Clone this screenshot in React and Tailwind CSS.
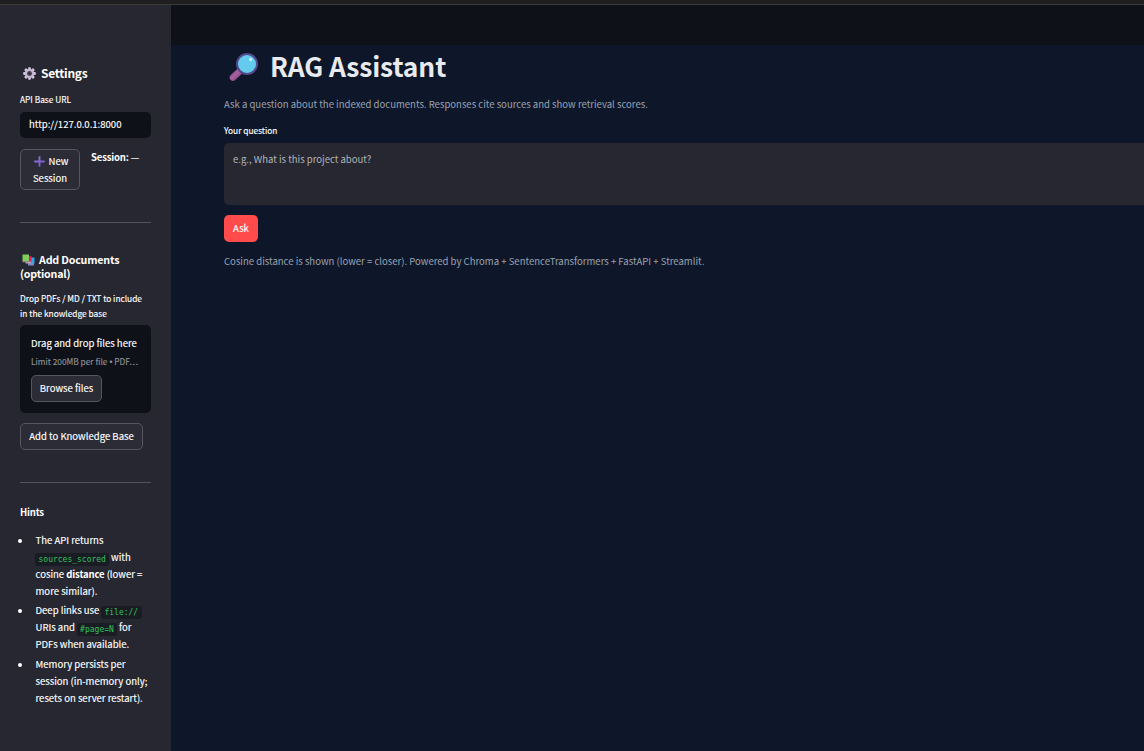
const Gear = () => (
  <svg className="h-[13px] w-[13px] shrink-0" viewBox="0 0 26 26">
    <g fill="#d3c8df">
      {[0, 45, 90, 135, 180, 225, 270, 315].map((a) => (
        <rect key={a} x="10.2" y="0.3" width="5.6" height="7" rx="1.6" transform={`rotate(${a} 13 13)`} />
      ))}
    </g>
    <circle cx="13" cy="13" r="6.8" fill="none" stroke="#c3b5d2" strokeWidth="5" />
    <circle cx="13" cy="13" r="4.6" fill="#4a4454" />
    <circle cx="13" cy="13" r="2" fill="#26272f" />
  </svg>
);

const Plus = () => (
  <svg className="h-[11px] w-[11px] shrink-0" viewBox="0 0 20 20">
    <defs>
      <linearGradient id="plus" x1="0" y1="0" x2="1" y2="1">
        <stop offset="0" stopColor="#9a7ce0" />
        <stop offset="1" stopColor="#6f4fc4" />
      </linearGradient>
    </defs>
    <path d="M8.3 0.5h3.4v7.8h7.8v3.4H11.7v7.8H8.3V11.7H0.5V8.3H8.3z" fill="url(#plus)" />
  </svg>
);

const Books = () => (
  <svg className="h-[12px] w-[13px] shrink-0" viewBox="0 0 26 24">
    <path d="M13 7h12v12H13z" fill="#2fa8e8" />
    <path d="M12 18h12v5H12z" fill="#7f88c8" />
    <path d="M8 4h11v12H8z" fill="#e5175c" />
    <path d="M7 15h11v4H7z" fill="#b9a0b8" />
    <path d="M1 1h13v13H1z" fill="#7fce5b" />
    <path d="M1 14h13v2.5H1z" fill="#8f8a86" />
  </svg>
);

const Magnifier = () => (
  <svg className="h-[30px] w-[30px] shrink-0" viewBox="0 0 30 30">
    <defs>
      <linearGradient id="handle" x1="0" y1="0" x2="1" y2="1">
        <stop offset="0" stopColor="#8d4f90" />
        <stop offset="0.5" stopColor="#a9619f" />
        <stop offset="1" stopColor="#7b407f" />
      </linearGradient>
    </defs>
    <path d="M4 25.5L11 19" stroke="url(#handle)" strokeWidth="6.6" strokeLinecap="round" />
    <circle cx="18" cy="12" r="10" fill="#64cbee" stroke="#54498a" strokeWidth="2" />
    <circle cx="21.6" cy="7.5" r="1.6" fill="#d8f6ff" />
  </svg>
);

const Code = ({ children }) => (
  <code className="mx-[-0.5px] rounded-[3px] bg-[#1a1c24] px-[3.5px] py-[2px] align-[-1px] font-['DejaVu_Sans_Mono',monospace] text-[8px] leading-none text-[#31c45c] [-webkit-text-stroke:0px]">
    {children}
  </code>
);

const Bullet = ({ children }) => (
  <li className="flex">
    <span className="mt-[7px] mr-[13.5px] ml-[-2px] h-[4px] w-[4px] shrink-0 rounded-full bg-white" />
    <div className="whitespace-nowrap">{children}</div>
  </li>
);

export default function App() {
  return (
    <div className="flex h-[751px] w-[1144px] flex-col overflow-hidden bg-[#0e172a] font-['Noto_Sans_CJK_SC',sans-serif] text-[9.55px] text-white">
      <div className="h-[5px] shrink-0 border-b border-[#3b3b3b] bg-[#1f1f1f]" />
      <div className="flex min-h-0 flex-1">
        <aside className="flex w-[171px] shrink-0 flex-col bg-[#262730] px-[20px] pt-[58px] [-webkit-text-stroke:0.14px]">
          <h2 className="flex h-[20px] items-center pl-[3px] text-[12px] leading-[20px] font-bold tracking-[-0.28px] [-webkit-text-stroke:0px]">
            <Gear />
            <span className="ml-[5px]">Settings</span>
          </h2>
          <label className="mt-[9px] h-[14px] text-[8.35px] leading-[14px]">API Base URL</label>
          <div className="mt-[6px] h-[26px] w-[131px] rounded-[5px] bg-[#0e1117] pl-[9px] leading-[25px]">
            http://127.0.0.1:8000
          </div>
          <div className="mt-[11px] flex">
            <button className="h-[41px] w-[60px] rounded-[5px] border border-[#555660] bg-[#2b2c36] pt-[1px] text-center leading-[17px]">
              <span className="flex items-center justify-center gap-[4px] pl-[2px]">
                <Plus />
                New
              </span>
              <span className="block">Session</span>
            </button>
            <p className="ml-[11px] h-[17px] leading-[17px]">
              <b className="tracking-[-0.18px] [-webkit-text-stroke:0px]">Session:</b> —
            </p>
          </div>
          <hr className="mt-[32px] border-[#51525b]" />
          <h3 className="mt-[30px] text-[10.7px] leading-[14px] font-bold tracking-[-0.2px] [-webkit-text-stroke:0px]">
            <span className="flex items-center pl-[2px]">
              <Books />
              <span className="ml-[4px] whitespace-nowrap">Add Documents</span>
            </span>
            (optional)
          </h3>
          <p className="mt-[10px] text-[8.35px] leading-[15px] whitespace-nowrap">
            Drop PDFs / MD / TXT to include
            <br />
            in the knowledge base
          </p>
          <div className="mt-[4px] flex h-[88px] w-[131px] flex-col items-start rounded-[5px] bg-[#0e1117] px-[11px] pt-[10px]">
            <div className="leading-[17px] whitespace-nowrap">Drag and drop files here</div>
            <div className="mt-[2px] h-[14px] text-[8.3px] leading-[14px] whitespace-nowrap text-[#8f9095]">
              Limit 200MB per file<span className="font-['Liberation_Sans',sans-serif] tracking-[-0.2px]"> • </span>PDF…
            </div>
            <button className="mt-[7px] h-[27px] w-[71px] rounded-[5px] border border-[#555660] bg-[#2b2c36] leading-[25px]">
              Browse files
            </button>
          </div>
          <button className="mt-[10px] h-[27px] w-[123px] rounded-[5px] border border-[#555660] bg-[#2b2c36] leading-[25px] whitespace-nowrap">
            Add to Knowledge Base
          </button>
          <hr className="mt-[32px] border-[#51525b]" />
          <p className="mt-[21px] leading-[17px] font-bold tracking-[-0.2px] [-webkit-text-stroke:0px]">Hints</p>
          <ul className="mt-[11px] flex flex-col leading-[17px]">
            <Bullet>
              The API returns
              <br />
              <Code>sources_scored</Code> with
              <br />
              cosine <b className="tracking-[-0.15px] [-webkit-text-stroke:0px]">distance</b> (lower =
              <br />
              more similar).
            </Bullet>
            <li className="h-[2px]" />
            <Bullet>
              Deep links use <Code>file://</Code>
              <br />
              URIs and <Code>#page=N</Code> for
              <br />
              PDFs when available.
            </Bullet>
            <li className="h-[3px]" />
            <Bullet>
              Memory persists per
              <br />
              session (in-memory only;
              <br />
              resets on server restart).
            </Bullet>
          </ul>
        </aside>
        <main className="flex min-w-0 flex-1 flex-col">
          <header className="h-[40px] shrink-0 bg-[#0e1117]" />
          <div className="flex flex-col pl-[53px]">
            <h1 className="mt-[4px] flex h-[36px] items-center pl-[5px] text-[26.4px] leading-[36px] font-bold text-[#e8eaee]">
              <Magnifier />
              <span className="mt-[-2px] ml-[11px] tracking-[-0.1px]">RAG Assistant</span>
            </h1>
            <p className="mt-[11px] leading-[17px] text-[#99a2b0]">
              Ask a question about the indexed documents. Responses cite sources and show retrieval scores.
            </p>
            <label className="mt-[10px] h-[14px] text-[8.35px] leading-[14px] [-webkit-text-stroke:0.14px]">
              Your question
            </label>
            <div className="mt-[6px] h-[62px] rounded-l-[5px] bg-[#262730] pt-[8px] pl-[9px] leading-[17px] text-[#b4b5ba]">
              e.g., What is this project about?
            </div>
            <button className="mt-[10px] h-[27px] w-[34px] rounded-[5px] bg-[#ff4b4b] leading-[27px] text-white [-webkit-text-stroke:0.14px]">
              Ask
            </button>
            <p className="mt-[11px] leading-[17px] text-[#99a2b0]">
              Cosine distance is shown (lower = closer). Powered by Chroma + SentenceTransformers + FastAPI + Streamlit.
            </p>
          </div>
        </main>
      </div>
    </div>
  );
}
